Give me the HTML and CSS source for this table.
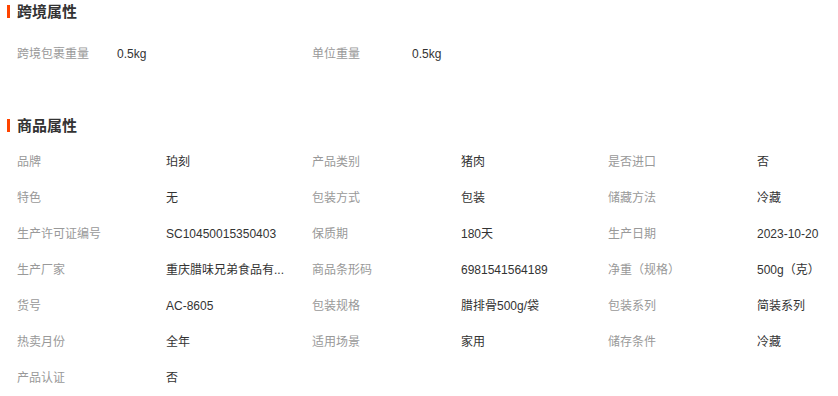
FILE: index.html
```html
<!DOCTYPE html>
<html lang="zh-CN">
<head>
<meta charset="utf-8">
<title>商品属性</title>
<link rel="stylesheet" href="styles.css">
</head>
<body>
<div class="page">
  <section class="section section-cross">
    <h2 class="title">跨境属性</h2>
    <div class="grid grid-cross">
      <div class="item"><span class="label">跨境包裹重量</span><span class="value">0.5kg</span></div>
      <div class="item"><span class="label">单位重量</span><span class="value">0.5kg</span></div>
    </div>
  </section>
  <section class="section section-goods">
    <h2 class="title">商品属性</h2>
    <div class="grid">
      <div class="item"><span class="label">品牌</span><span class="value">珀刻</span></div>
      <div class="item"><span class="label">产品类别</span><span class="value">猪肉</span></div>
      <div class="item"><span class="label">是否进口</span><span class="value">否</span></div>
      <div class="item"><span class="label">特色</span><span class="value">无</span></div>
      <div class="item"><span class="label">包装方式</span><span class="value">包装</span></div>
      <div class="item"><span class="label">储藏方法</span><span class="value">冷藏</span></div>
      <div class="item"><span class="label">生产许可证编号</span><span class="value">SC10450015350403</span></div>
      <div class="item"><span class="label">保质期</span><span class="value">180天</span></div>
      <div class="item"><span class="label">生产日期</span><span class="value">2023-10-20</span></div>
      <div class="item"><span class="label">生产厂家</span><span class="value" title="重庆腊味兄弟食品有限公司">重庆腊味兄弟食品有...</span></div>
      <div class="item"><span class="label">商品条形码</span><span class="value">6981541564189</span></div>
      <div class="item"><span class="label">净重（规格）</span><span class="value">500g（克）</span></div>
      <div class="item"><span class="label">货号</span><span class="value">AC-8605</span></div>
      <div class="item"><span class="label">包装规格</span><span class="value">腊排骨500g/袋</span></div>
      <div class="item"><span class="label">包装系列</span><span class="value">简装系列</span></div>
      <div class="item"><span class="label">热卖月份</span><span class="value">全年</span></div>
      <div class="item"><span class="label">适用场景</span><span class="value">家用</span></div>
      <div class="item"><span class="label">储存条件</span><span class="value">冷藏</span></div>
      <div class="item"><span class="label">产品认证</span><span class="value">否</span></div>
    </div>
  </section>
</div>
</body>
</html>
```
FILE: styles.css
```css
html, body {
  margin: 0;
  padding: 0;
  background: #fff;
}
body {
  font-family: "Liberation Sans", "Noto Sans CJK SC", sans-serif;
  font-size: 12px;
  color: #333;
}
.page {
  width: 838px;
  overflow: hidden;
}
.title {
  display: flex;
  align-items: center;
  margin: 0;
  padding-left: 7px;
  height: 23px;
  line-height: 23px;
  font-size: 15px;
  font-weight: bold;
  color: #333;
}
.title::before {
  content: "";
  width: 3px;
  height: 13px;
  margin-right: 7px;
  background: #ff4400;
}
.grid {
  display: grid;
  grid-template-columns: 295px 296px 1fr;
  padding-left: 17px;
}
.section-cross .grid {
  margin-top: 13px;
}
.section-goods {
  margin-top: 42px;
}
.section-goods .grid {
  margin-top: 7px;
}
.item {
  display: flex;
  height: 36px;
  line-height: 36px;
  white-space: nowrap;
}
.label {
  flex: 0 0 149px;
  color: #999;
}
.grid-cross .label {
  flex-basis: 100px;
}
.value {
  color: #333;
}
```
